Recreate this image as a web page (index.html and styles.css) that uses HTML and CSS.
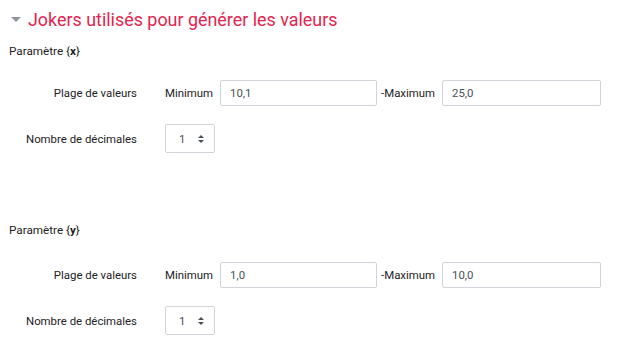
FILE: index.html
```html
<!DOCTYPE html>
<html lang="fr">
<head>
  <meta charset="UTF-8" />
  <title>Jokers utilisés pour générer les valeurs</title>
  <link rel="stylesheet" href="styles.css">
</head>
<body>

  <!-- En-tête de section -->
  <h3 class="titre">
    <span class="triangle"></span>
    Jokers utilisés pour générer les valeurs
  </h3>

  <!-- Paramètre x -->
  <div class="parametre">
    <div class="nom-param">Paramètre {<b>x</b>}</div>
    <div class="ligne ligne-plage">
      <div class="etiquette">Plage de valeurs</div>
      <div class="champs">
        <span>Minimum</span>
        <input class="saisie" type="text" value="10,1">
        <span class="maxi">-Maximum</span>
        <input class="saisie large" type="text" value="25,0">
      </div>
    </div>
    <div class="ligne">
      <div class="etiquette">Nombre de décimales</div>
      <div class="champs">
        <div class="choix">1 <span class="fleches"></span></div>
      </div>
    </div>
  </div>

  <!-- Paramètre y -->
  <div class="parametre second">
    <div class="nom-param">Paramètre {<b>y</b>}</div>
    <div class="ligne ligne-plage">
      <div class="etiquette">Plage de valeurs</div>
      <div class="champs">
        <span>Minimum</span>
        <input class="saisie" type="text" value="1,0">
        <span class="maxi">-Maximum</span>
        <input class="saisie large" type="text" value="10,0">
      </div>
    </div>
    <div class="ligne">
      <div class="etiquette">Nombre de décimales</div>
      <div class="champs">
        <div class="choix">1 <span class="fleches"></span></div>
      </div>
    </div>
  </div>

</body>
</html>
```

FILE: styles.css
```css
body {
  margin: 0;
  padding: 6px 9px 0;
  font-family: Roboto, 'Liberation Sans', sans-serif;
  font-size: 11.4px;
  color: #1d2125;
  background: #fff;
}

.titre {
  display: flex;
  align-items: center;
  gap: 7px;
  margin: 0;
  height: 26px;
  font-size: 17.9px;
  font-weight: 400;
  color: #e3244f;
}

.triangle {
  width: 0;
  height: 0;
  margin-left: 2px;
  border-left: 5px solid transparent;
  border-right: 5px solid transparent;
  border-top: 5px solid #8f959e;
}

.parametre {
  margin-top: 12px;
}

.parametre.second {
  margin-top: 70px;
}

.nom-param {
  font-size: 11.7px;
  line-height: 14px;
}

.nom-param b {
  font-weight: 700;
}

.ligne {
  display: grid;
  grid-template-columns: 128px auto;
  gap: 28px;
  align-items: center;
  margin-top: 18px;
}

.ligne-plage {
  margin-top: 22px;
}

.second .ligne-plage {
  margin-top: 25px;
}

.etiquette {
  text-align: right;
}

.champs {
  display: flex;
  align-items: center;
  gap: 7px;
}

.maxi {
  margin-left: -3px;
}

.saisie {
  width: 157px;
  height: 26px;
  box-sizing: border-box;
  padding: 0 9px;
  border: 1px solid #ced4da;
  border-radius: 2px;
  font-family: inherit;
  font-size: 11.4px;
  color: #495057;
  outline: none;
}

.saisie.large {
  width: 159px;
}

.choix {
  display: flex;
  align-items: center;
  justify-content: space-between;
  box-sizing: border-box;
  width: 50px;
  height: 29px;
  padding: 0 10px 0 13px;
  border: 1px solid #ced4da;
  border-radius: 2px;
  color: #495057;
}

.fleches {
  position: relative;
  width: 6px;
  height: 8px;
}

.fleches::before,
.fleches::after {
  content: '';
  position: absolute;
  left: 0;
  border-left: 3px solid transparent;
  border-right: 3px solid transparent;
}

.fleches::before {
  top: 0;
  border-bottom: 3px solid #495057;
}

.fleches::after {
  bottom: 0;
  border-top: 3px solid #495057;
}
```
